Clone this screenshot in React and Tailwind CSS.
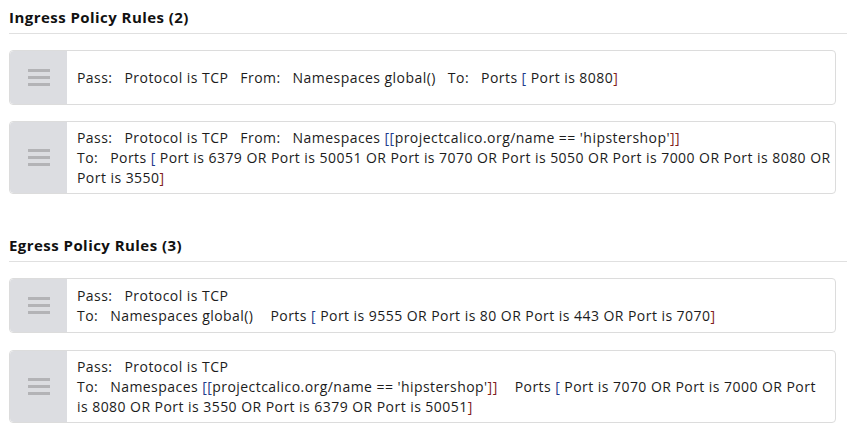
import React from "react";

const Open = () => <span className="text-[#1e3a8a]">[</span>;
const Close = () => <span className="text-[#7f1d1d]">]</span>;

function Handle() {
  return (
    <div className="w-[57px] shrink-0 bg-[#dcdde1] rounded-l-[4px] flex flex-col items-center justify-center gap-[4px]">
      <div className="w-[22px] h-[3px] bg-[#b3b3b6]" />
      <div className="w-[22px] h-[3px] bg-[#b3b3b6]" />
      <div className="w-[22px] h-[3px] bg-[#b3b3b6]" />
    </div>
  );
}

function Card({ children, className = "" }) {
  return (
    <div className={"flex min-h-[55px] border border-[#dcdcdc] rounded-[4px] bg-white " + className}>
      <Handle />
      <div className="flex-1 flex flex-col justify-center pl-[10px] pr-[4px] pt-[6px] pb-[5px] text-[14px] leading-[20px] tracking-[0.45px] text-[#1c1c1c]">
        {children}
      </div>
    </div>
  );
}

function Title({ children, className = "" }) {
  return (
    <div className={"text-[15px] font-bold leading-[20px] tracking-[0.45px] text-[#111] pt-[7px] pb-[6px] border-b border-[#e0e0e0] " + className}>
      {children}
    </div>
  );
}

export default function App() {
  return (
    <div className="w-[847px] h-[430px] bg-white pl-[9px] overflow-hidden" style={{ fontFamily: '"Open Sans", sans-serif' }}>
      <Title>Ingress Policy Rules (2)</Title>
      <div className="pr-[11px]">
        <Card className="mt-[16px]">
          <div>
            <span className="mr-[12px]">Pass:</span>
            <span className="mr-[12px]">Protocol is TCP</span>
            <span className="mr-[12px]">From:</span>
            <span className="mr-[12px]">Namespaces global()</span>
            <span className="mr-[12px]">To:</span>
            <span>Ports <Open /> Port is 8080<Close /></span>
          </div>
        </Card>
        <Card className="mt-[16px]">
          <div>
            <span className="mr-[12px]">Pass:</span>
            <span className="mr-[12px]">Protocol is TCP</span>
            <span className="mr-[12px]">From:</span>
            <span>Namespaces <Open /><Open />projectcalico.org/name == 'hipstershop'<Close /><Close /></span>
          </div>
          <div>
            <span className="mr-[12px]">To:</span>
            <span>Ports <Open /> Port is 6379 OR Port is 50051 OR Port is 7070 OR Port is 5050 OR Port is 7000 OR Port is 8080 OR Port is 3550<Close /></span>
          </div>
        </Card>
      </div>
      <Title className="mt-[34px]">Egress Policy Rules (3)</Title>
      <div className="pr-[11px]">
        <Card className="mt-[16px]">
          <div>
            <span className="mr-[12px]">Pass:</span>
            <span>Protocol is TCP</span>
          </div>
          <div>
            <span className="mr-[12px]">To:</span>
            <span className="mr-[17px]">Namespaces global()</span>
            <span>Ports <Open /> Port is 9555 OR Port is 80 OR Port is 443 OR Port is 7070<Close /></span>
          </div>
        </Card>
        <Card className="mt-[17px]">
          <div>
            <span className="mr-[12px]">Pass:</span>
            <span>Protocol is TCP</span>
          </div>
          <div>
            <span className="mr-[12px]">To:</span>
            <span className="mr-[17px]">Namespaces <Open /><Open />projectcalico.org/name == 'hipstershop'<Close /><Close /></span>
            <span>Ports <Open /> Port is 7070 OR Port is 7000 OR Port is 8080 OR Port is 3550 OR Port is 6379 OR Port is 50051<Close /></span>
          </div>
        </Card>
      </div>
    </div>
  );
}
